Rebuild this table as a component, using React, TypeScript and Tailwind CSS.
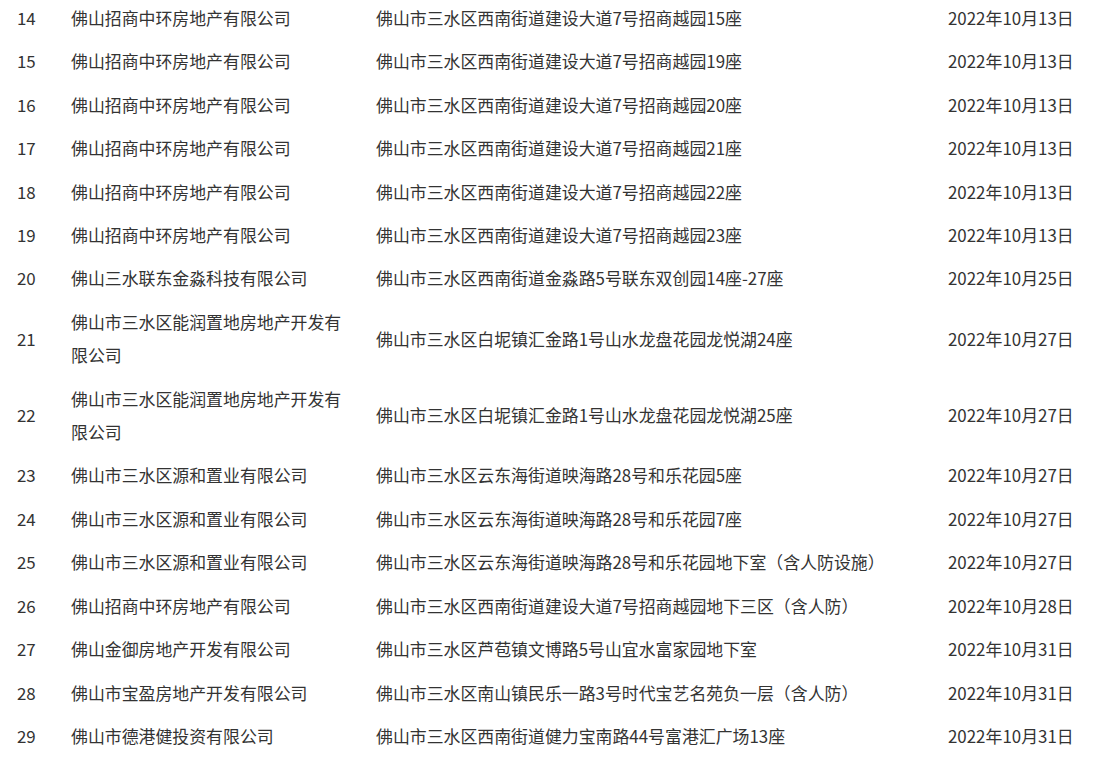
import React from 'react';

type Row = {
  no: number;
  company: string;
  address: string;
  date: string;
};

const ROWS: Row[] = [
  { no: 14, company: '佛山招商中环房地产有限公司', address: '佛山市三水区西南街道建设大道7号招商越园15座', date: '2022年10月13日' },
  { no: 15, company: '佛山招商中环房地产有限公司', address: '佛山市三水区西南街道建设大道7号招商越园19座', date: '2022年10月13日' },
  { no: 16, company: '佛山招商中环房地产有限公司', address: '佛山市三水区西南街道建设大道7号招商越园20座', date: '2022年10月13日' },
  { no: 17, company: '佛山招商中环房地产有限公司', address: '佛山市三水区西南街道建设大道7号招商越园21座', date: '2022年10月13日' },
  { no: 18, company: '佛山招商中环房地产有限公司', address: '佛山市三水区西南街道建设大道7号招商越园22座', date: '2022年10月13日' },
  { no: 19, company: '佛山招商中环房地产有限公司', address: '佛山市三水区西南街道建设大道7号招商越园23座', date: '2022年10月13日' },
  { no: 20, company: '佛山三水联东金淼科技有限公司', address: '佛山市三水区西南街道金淼路5号联东双创园14座-27座', date: '2022年10月25日' },
  { no: 21, company: '佛山市三水区能润置地房地产开发有限公司', address: '佛山市三水区白坭镇汇金路1号山水龙盘花园龙悦湖24座', date: '2022年10月27日' },
  { no: 22, company: '佛山市三水区能润置地房地产开发有限公司', address: '佛山市三水区白坭镇汇金路1号山水龙盘花园龙悦湖25座', date: '2022年10月27日' },
  { no: 23, company: '佛山市三水区源和置业有限公司', address: '佛山市三水区云东海街道映海路28号和乐花园5座', date: '2022年10月27日' },
  { no: 24, company: '佛山市三水区源和置业有限公司', address: '佛山市三水区云东海街道映海路28号和乐花园7座', date: '2022年10月27日' },
  { no: 25, company: '佛山市三水区源和置业有限公司', address: '佛山市三水区云东海街道映海路28号和乐花园地下室（含人防设施）', date: '2022年10月27日' },
  { no: 26, company: '佛山招商中环房地产有限公司', address: '佛山市三水区西南街道建设大道7号招商越园地下三区（含人防）', date: '2022年10月28日' },
  { no: 27, company: '佛山金御房地产开发有限公司', address: '佛山市三水区芦苞镇文博路5号山宜水富家园地下室', date: '2022年10月31日' },
  { no: 28, company: '佛山市宝盈房地产开发有限公司', address: '佛山市三水区南山镇民乐一路3号时代宝艺名苑负一层（含人防）', date: '2022年10月31日' },
  { no: 29, company: '佛山市德港健投资有限公司', address: '佛山市三水区西南街道健力宝南路44号富港汇广场13座', date: '2022年10月31日' },
];

export default function App() {
  return (
    <div className="w-[1097px] h-[768px] overflow-hidden bg-white">
      <table
        className="-mt-[4px] w-[1097px] table-fixed border-collapse text-[16.9px] leading-[33.4px] text-[#333]"
        style={{ fontFamily: '"Noto Sans CJK SC", "Microsoft YaHei", sans-serif' }}
      >
        <colgroup>
          <col className="w-[71px]" />
          <col className="w-[305px]" />
          <col className="w-[572px]" />
          <col className="w-[149px]" />
        </colgroup>
        <tbody>
          {ROWS.map((row) => (
            <tr key={row.no}>
              <td className="py-[5px] pl-[17px] align-middle">{row.no}</td>
              <td className="py-[5px] pr-[24px] align-middle">{row.company}</td>
              <td className="py-[5px] pr-[10px] align-middle">{row.address}</td>
              <td className="py-[5px] align-middle whitespace-nowrap">{row.date}</td>
            </tr>
          ))}
        </tbody>
      </table>
    </div>
  );
}
